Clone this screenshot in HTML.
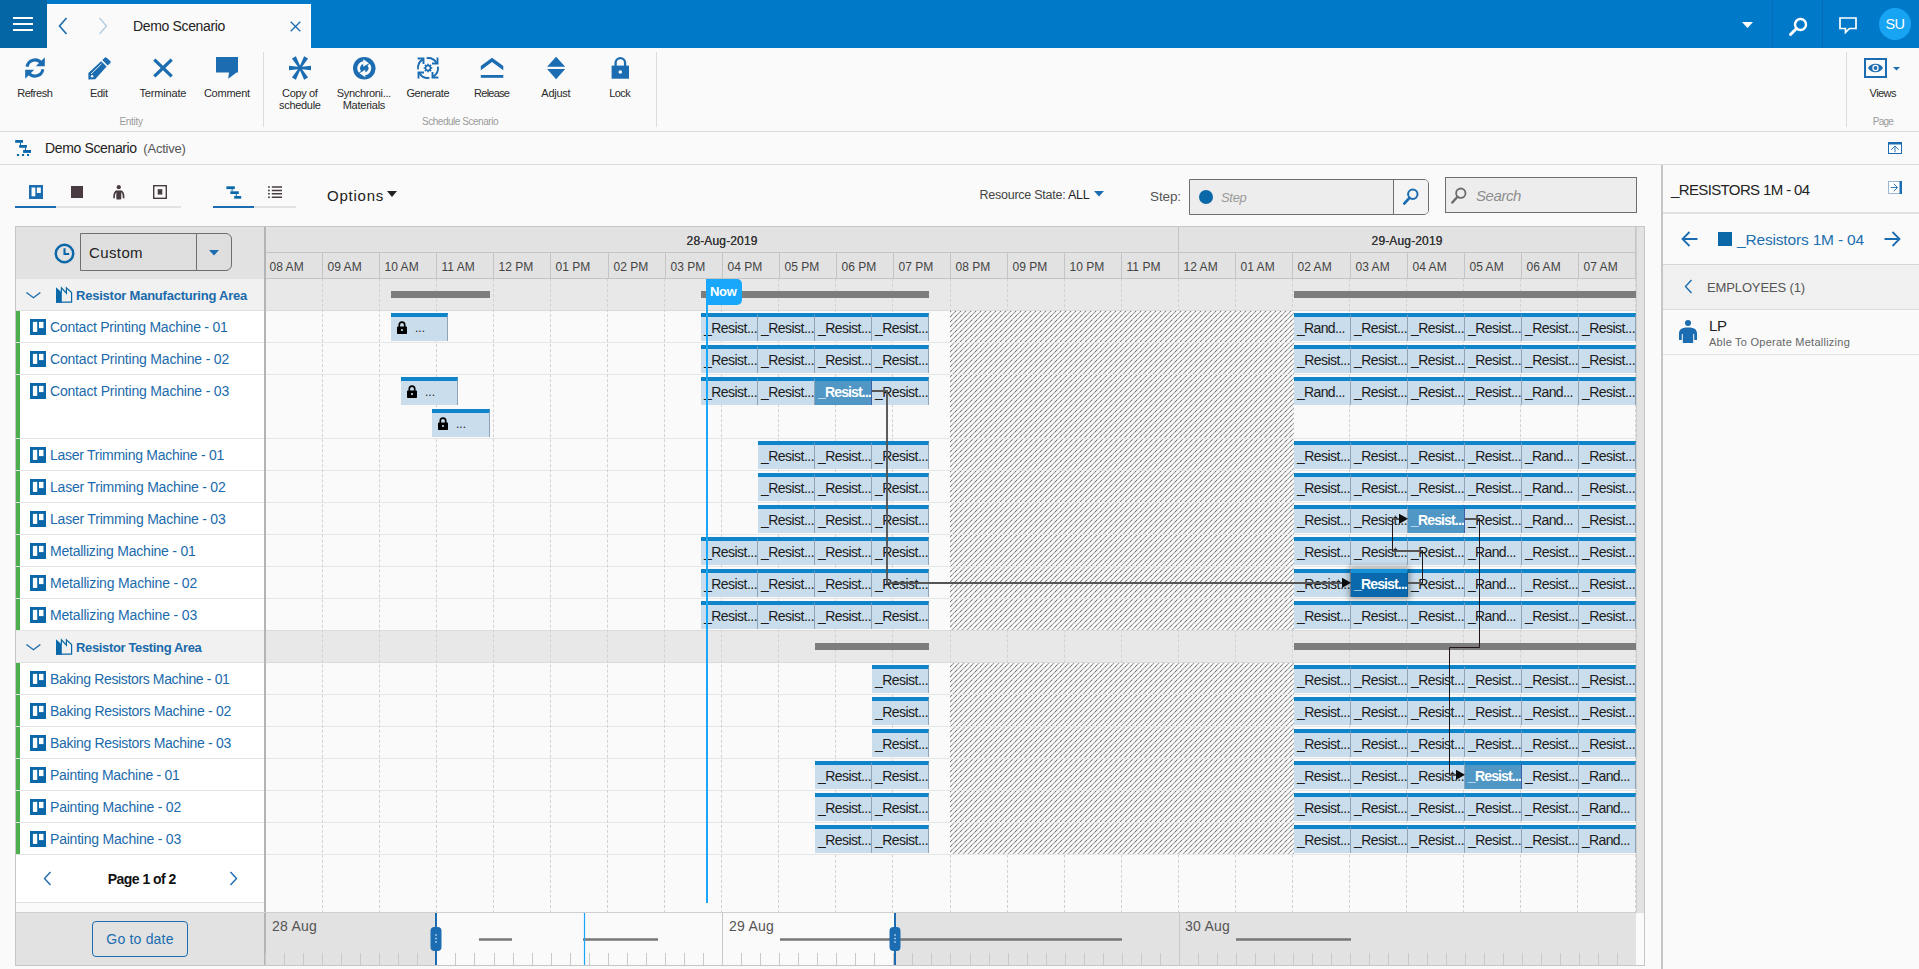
<!DOCTYPE html>
<html lang="en"><head><meta charset="utf-8"><title>Demo Scenario</title>
<style>
*{box-sizing:border-box;margin:0;padding:0}
html,body{width:1919px;height:969px;overflow:hidden;background:#fafafa;font-family:"Liberation Sans",sans-serif;color:#222;font-size:14px}
#root{position:absolute;left:0;top:0;width:1919px;height:969px;overflow:hidden;background:#fafafa}
.a{position:absolute}
svg{position:absolute;overflow:visible}
.t{position:absolute;white-space:nowrap;line-height:1}
.rb{position:absolute;top:48px;width:64px;height:83px;text-align:center}
.rb .l{position:absolute;left:-10px;right:-10px;font-size:11px;line-height:12px;color:#2a2a2a;text-align:center;white-space:nowrap}
.grp{position:absolute;top:117px;font-size:10px;color:#9a9a9a;line-height:10px;white-space:nowrap;transform:translateX(-50%)}
.row{position:absolute;left:16px;width:248px;height:32px;background:#fff;border-bottom:1px solid #e4e4e4}
.row .g{position:absolute;left:0;top:0;width:4px;height:100%;background:#4cae4c}
.row .n{position:absolute;left:34px;top:9px;line-height:14px;font-size:14px;color:#1b6aab;white-space:nowrap}
.gr{position:absolute;left:16px;width:248px;height:32px;background:#f1f1f1;border-bottom:1px solid #e0e0e0}
.gr .n{position:absolute;left:60px;top:10px;line-height:13px;font-size:13px;font-weight:bold;color:#1b6aab;white-space:nowrap}
.tk{position:absolute;height:28px;background:#c9ddec;border-top:4px solid #0f84c8;border-right:1px solid #8fa3b5;font-size:14px;line-height:23px;color:#1c1c1c;white-space:nowrap;overflow:hidden;padding-left:3px}
.tk.h{background:#5097c5;color:#fff;border-right-color:#3d5ea6;font-weight:bold}
.tk.s{background:#0a69ad;color:#fff;border-top-color:#1390d8;border-right-color:#0a5a98;box-shadow:0 0 6px 2px rgba(0,0,0,.35);font-weight:bold}
.hl{position:absolute;top:253px;height:25px;border-left:1px solid #c4c4c4;font-size:12px;line-height:28px;color:#444;padding-left:4.500px;white-space:nowrap;letter-spacing:.03px}
.bar{position:absolute;height:7px;background:#7d7d7d}
</style></head>
<body><div id="root">

<div class="a" style="left:0;top:0;width:1919px;height:48px;background:#0079c9"></div>
<div class="a" style="left:0;top:0;width:47px;height:48px;background:#0466a5"></div>
<svg style="left:13px;top:16px" width="21" height="16" viewBox="0 0 21 16"><path d="M0 2h20M0 8h20M0 14h20" stroke="#fff" stroke-width="2" fill="none"/></svg>
<div class="a" style="left:47px;top:4px;width:264px;height:44px;background:#fafafa;border-top:1px solid #fff;border-right:1px solid #fff"></div>
<svg style="left:58px;top:17px" width="10" height="18" viewBox="0 0 10 18"><path d="M8.5 1L1.5 9l7 8" stroke="#1b6cb0" stroke-width="1.6" fill="none"/></svg>
<svg style="left:98px;top:17px" width="10" height="18" viewBox="0 0 10 18"><path d="M1.5 1l7 8-7 8" stroke="#b4d0e6" stroke-width="1.5" fill="none"/></svg>
<div class="t" style="top:19.15px;font-size:14px;color:#222;left:133px;letter-spacing:-0.345px;">Demo Scenario</div>
<svg style="left:290px;top:21px" width="11" height="11" viewBox="0 0 11 11"><path d="M.7.7l9.6 9.6M10.3.7L.7 10.3" stroke="#1b6cb0" stroke-width="1.3" fill="none"/></svg>
<svg style="left:1742px;top:21.500px" width="12" height="7" viewBox="0 0 12 7"><path d="M0 0h11L5.5 6z" fill="#fff"/></svg>
<div class="a" style="left:1772px;top:0;width:1px;height:48px;background:#0a6bb5"></div>
<div class="a" style="left:1822px;top:0;width:1px;height:48px;background:#0a6bb5"></div>
<svg style="left:1789px;top:16.500px" width="19" height="19" viewBox="0 0 19 19"><circle cx="11.5" cy="7.5" r="5.5" stroke="#fff" stroke-width="2.4" fill="none"/><path d="M7.5 11.5L1.5 17.5" stroke="#fff" stroke-width="3" stroke-linecap="round"/></svg>
<svg style="left:1838.500px;top:16.500px" width="18" height="17" viewBox="0 0 18 17"><path d="M1 1h16v10.5h-6.5L6.5 15.5v-4H1z" stroke="#fff" stroke-width="1.7" fill="none" stroke-linejoin="miter"/></svg>
<div class="a" style="left:1879px;top:8px;width:32px;height:32px;border-radius:16px;background:#17a4f3"></div>
<div class="t" style="top:16.73px;font-size:14.5px;color:#fff;left:1745.3px;width:300px;text-align:center;letter-spacing:-0.571px;text-indent:-0.571px;">SU</div>
<div class="a" style="left:0;top:131px;width:1919px;height:1px;background:#d9d9d9"></div>
<div class="a" style="left:0;top:164px;width:1919px;height:1px;background:#dedede"></div>
<div class="a" style="left:263px;top:52px;width:1px;height:75px;background:#dcdcdc"></div>
<div class="a" style="left:656px;top:52px;width:1px;height:75px;background:#dcdcdc"></div>
<div class="a" style="left:1846px;top:52px;width:1px;height:75px;background:#dcdcdc"></div>
<div class="rb" style="left:3px"><svg style="left:22px;top:9px" width="20" height="22" viewBox="0 0 20 22"><path d="M2.100 9.700A8 8 0 0 1 16.300 6" stroke="#1b6cb0" stroke-width="3" fill="none"/><path d="M19.800.3V9.200H10.800z" fill="#1b6cb0"/><path d="M17.900 12.300A8 8 0 0 1 3.700 16" stroke="#1b6cb0" stroke-width="3" fill="none"/><path d="M.2 21.700V12.800H9.200z" fill="#1b6cb0"/></svg><div class="l" style="top:39px;letter-spacing:-0.474px;text-indent:-0.474px">Refresh</div></div>
<div class="rb" style="left:67px"><svg style="left:20.500px;top:8.700px" width="23" height="23" viewBox="0 0 23 23"><path d="M14.300 3L16.700.7a1.300 1.300 0 0 1 1.900 0L22.300 4.100a1.300 1.300 0 0 1 0 1.900L19.700 8.400z" fill="#1b6cb0"/><path d="M.4 15.900L13.100 4.200l5.500 5.300L7.200 22.200.4 22.400z" fill="#1b6cb0"/><path d="M3 17L13.500 6.800" stroke="#fafafa" stroke-width=".9"/><circle cx="4.100" cy="19.300" r="1.200" fill="#fafafa"/></svg><div class="l" style="top:39px;letter-spacing:-0.289px;text-indent:-0.289px">Edit</div></div>
<div class="rb" style="left:131px"><svg style="left:22px;top:10px" width="20" height="20" viewBox="0 0 20 20"><path d="M1.300 1.600l17.400 16.800M18.700 1.600L1.300 18.400" stroke="#1b6cb0" stroke-width="3.300" fill="none"/></svg><div class="l" style="top:39px;letter-spacing:-0.166px;text-indent:-0.166px">Terminate</div></div>
<div class="rb" style="left:195px"><svg style="left:21px;top:9px" width="22" height="22" viewBox="0 0 22 22"><path d="M0 0h22v15.400h-1.400L12.200 21.800 13 15.400H0z" fill="#1b6cb0"/></svg><div class="l" style="top:39px;letter-spacing:-0.24px;text-indent:-0.24px">Comment</div></div>
<div class="rb" style="left:268px"><svg style="left:21.200px;top:9px" width="22" height="22" viewBox="0 0 22 22"><path d="M11.00 10.10L22.00 8.70L22.00 13.30L11.00 11.90zM11.78 10.55L19.09 20.42L15.11 22.72L10.22 11.45zM11.78 11.45L6.89 22.72L2.91 20.42L10.22 10.55zM11.00 11.90L0.00 13.30L-0.00 8.70L11.00 10.10zM10.22 11.45L2.91 1.58L6.89 -0.72L11.78 10.55zM10.22 10.55L15.11 -0.72L19.09 1.58L11.78 11.45z" fill="#1b6cb0"/><circle cx="11" cy="11" r="1.600" fill="#1b6cb0"/></svg><div class="l" style="top:39px;letter-spacing:-0.344px;text-indent:-0.344px">Copy of</div><div class="l" style="top:51px;letter-spacing:-0.317px;text-indent:-0.317px">schedule</div></div>
<div class="rb" style="left:332px"><svg style="left:20.750px;top:8.750px" width="22.500" height="22.500" viewBox="0 0 22.500 22.500"><circle cx="11.25" cy="11.25" r="11.250" fill="#1b6cb0"/><path d="M6.96 14.85A5.600 5.600 0 0 1 10.47 5.70" stroke="#fafafa" stroke-width="2.700" fill="none"/><path d="M10.200 2.200L16 6.200 10.200 9.800z" fill="#fafafa"/><path d="M15.54 7.65A5.600 5.600 0 0 1 12.03 16.80" stroke="#fafafa" stroke-width="2.700" fill="none"/><path d="M12.300 20.300L6.500 16.300 12.300 12.700z" fill="#fafafa"/></svg><div class="l" style="top:39px;letter-spacing:-0.34px;text-indent:-0.34px">Synchroni...</div><div class="l" style="top:51px;letter-spacing:-0.236px;text-indent:-0.236px">Materials</div></div>
<div class="rb" style="left:396px"><svg style="left:21px;top:9px" width="22" height="22" viewBox="0 0 22 22"><g stroke="#1b6cb0" stroke-width="1.900" fill="none"><g transform="rotate(0 11 11)"><path d="M1.10 12.39A10 10 0 0 1 6.00 2.34" /><path d="M.6 1.500H6.500V7"/></g><g transform="rotate(90 11 11)"><path d="M1.10 12.39A10 10 0 0 1 6.00 2.34" /><path d="M.6 1.500H6.500V7"/></g><g transform="rotate(180 11 11)"><path d="M1.10 12.39A10 10 0 0 1 6.00 2.34" /><path d="M.6 1.500H6.500V7"/></g><g transform="rotate(270 11 11)"><path d="M1.10 12.39A10 10 0 0 1 6.00 2.34" /><path d="M.6 1.500H6.500V7"/></g><circle cx="11" cy="11" r="2.500" stroke-width="1.700"/><path d="M13.60 11.00L15.30 11.00M12.84 12.84L14.04 14.04M11.00 13.60L11.00 15.30M9.16 12.84L7.96 14.04M8.40 11.00L6.70 11.00M9.16 9.16L7.96 7.96M11.00 8.40L11.00 6.70M12.84 9.16L14.04 7.96" stroke-width="1.700"/></g></svg><div class="l" style="top:39px;letter-spacing:-0.395px;text-indent:-0.395px">Generate</div></div>
<div class="rb" style="left:460px"><svg style="left:20px;top:9px" width="24" height="22" viewBox="0 0 24 22"><path d="M.8 9L12 .8 23.300 9v4.300L12 4.900.8 13.300z" fill="#1b6cb0"/><rect x=".8" y="18" width="22.500" height="2.800" fill="#1b6cb0"/></svg><div class="l" style="top:39px;letter-spacing:-0.766px;text-indent:-0.766px">Release</div></div>
<div class="rb" style="left:524px"><svg style="left:23px;top:8px" width="19" height="24" viewBox="0 0 19 24"><path d="M9.100.7L18.200 10.800H.1zM.1 13.100H18.200L9.100 23.200z" fill="#1b6cb0"/></svg><div class="l" style="top:39px;letter-spacing:-0.262px;text-indent:-0.262px">Adjust</div></div>
<div class="rb" style="left:588px"><svg style="left:23px;top:8px" width="19" height="23" viewBox="0 0 19 23"><path d="M4.600 10.500V6.800a4.750 4.750 0 0 1 9.500 0V10.500" stroke="#1b6cb0" stroke-width="2.300" fill="none"/><rect x=".6" y="9.600" width="17.400" height="13.100" fill="#1b6cb0"/><circle cx="9.300" cy="16" r="1.800" fill="#fafafa"/></svg><div class="l" style="top:39px;letter-spacing:-0.609px;text-indent:-0.609px">Lock</div></div>
<div class="rb" style="left:1851px"><svg style="left:13.200px;top:10px" width="36" height="20" viewBox="0 0 36 20"><rect x="1" y="1" width="21" height="18" stroke="#1b6cb0" stroke-width="2" fill="none"/><path d="M4 10c3.200-5.600 11.800-5.600 15 0-3.200 5.600-11.800 5.600-15 0z" fill="#1b6cb0"/><circle cx="11.500" cy="10" r="3.200" fill="#fafafa"/><circle cx="11.500" cy="10" r="1.900" fill="#1b6cb0"/><path d="M29 9h7l-3.500 3.500z" fill="#1b6cb0"/></svg><div class="l" style="top:39px;letter-spacing:-0.569px;text-indent:-0.569px">Views</div></div>
<div class="grp" style="left:131px;letter-spacing:-0.302px">Entity</div>
<div class="grp" style="left:460px;letter-spacing:-0.467px">Schedule Scenario</div>
<div class="grp" style="left:1883px;letter-spacing:-0.764px">Page</div>
<svg style="left:15px;top:140px" width="17" height="17" viewBox="0 0 17 17"><g fill="#0a68a9"><rect x=".2" y="0" width="7.800" height="2.800"/><rect x="4.200" y="5" width="7.700" height="2.800"/><rect x="8.100" y="10" width="7.900" height="2.900"/><rect x="5" y="2.800" width="1" height="2.200"/><rect x="10" y="7.800" width="1" height="2.200"/><rect x="1.900" y="14" width="2.200" height="2"/><rect x="7" y="14" width="2.100" height="2"/><rect x="12" y="14" width="2.100" height="2"/></g></svg>
<div class="t" style="top:141.15px;font-size:14px;color:#222;left:45px;letter-spacing:-0.361px;">Demo Scenario</div>
<div class="t" style="top:142.00px;font-size:13px;color:#555;left:143.3px;letter-spacing:-0.207px;">(Active)</div>
<svg style="left:1888px;top:142px" width="14" height="12" viewBox="0 0 14 12"><rect x=".5" y=".5" width="13" height="11" stroke="#1b6cb0" fill="#fff"/><rect x="0" y="0" width="14" height="2.500" fill="#1b6cb0"/><path d="M7 10.300V4.200M3.200 7.800L7 4l3.800 3.800" stroke="#1b6cb0" stroke-width=".9" fill="none"/></svg>
<div class="a" style="left:15px;top:206px;width:166px;height:2px;background:#e2e2e2"></div>
<div class="a" style="left:15px;top:206px;width:41px;height:2px;background:#1b6cb0"></div>
<div class="a" style="left:213px;top:206px;width:83px;height:2px;background:#e2e2e2"></div>
<div class="a" style="left:213px;top:206px;width:41px;height:2px;background:#1b6cb0"></div>
<svg style="left:29px;top:185px" width="14" height="14" viewBox="0 0 16 16"><rect width="16" height="16" fill="#1b6cb0"/><rect x="2.900" y="2.900" width="4.300" height="10" fill="#fff"/><rect x="9" y="2.900" width="4.500" height="6.200" fill="#fff"/></svg>
<div class="a" style="left:71px;top:186px;width:12px;height:12px;background:#483c42"></div>
<svg style="left:112.500px;top:184.500px" width="12" height="15" viewBox="0 0 12 15"><circle cx="5.800" cy="2.200" r="2.100" fill="#483c42"/><path d="M3.300 5.500H8.300V13.600a1 1 0 0 1-1 1H4.300a1 1 0 0 1-1-1z" fill="#483c42"/><path d="M4 6.100C1.800 6.500 1 9 1 13.200M7.600 6.100C9.800 6.500 10.700 9 10.700 13.200" stroke="#483c42" stroke-width="1.700" fill="none"/></svg>
<svg style="left:153px;top:185px" width="14" height="14" viewBox="0 0 14 14"><rect x=".7" y=".7" width="12.600" height="12.600" stroke="#483c42" stroke-width="1.400" fill="none"/><rect x="4.700" y="4.200" width="4.600" height="5.400" fill="#483c42"/></svg>
<svg style="left:226px;top:185.500px" width="16" height="13" viewBox="0 0 16 13"><g fill="#0a68a9"><rect x=".4" y=".3" width="8.400" height="2.800"/><rect x="4.300" y="5.300" width="8.500" height="2.700"/><rect x="8.200" y="10" width="7" height="2.700"/><rect x="5.600" y="3.100" width="1" height="2.200"/><rect x="9.800" y="8" width="1" height="2"/></g></svg>
<svg style="left:268px;top:186px" width="14" height="12" viewBox="0 0 14 12"><path d="M3.800 1h10.200M3.800 4.400h10.200M3.800 7.800h10.200M3.800 11.200h10.200" stroke="#483c42" stroke-width="1.500"/><path d="M0 1h1.800M0 4.400h1.800M0 7.800h1.800M0 11.200h1.800" stroke="#483c42" stroke-width="1.500"/></svg>
<div class="t" style="top:187.80px;font-size:15px;color:#222;left:327px;letter-spacing:0.758px;">Options</div>
<svg style="left:387px;top:191px" width="10" height="6" viewBox="0 0 10 6"><path d="M0 0h10L5 6z" fill="#222"/></svg>
<div class="t" style="top:189.42px;font-size:12.5px;color:#444;left:979.5px;letter-spacing:-0.245px;">Resource State: <span style="color:#222">ALL</span></div>
<svg style="left:1094px;top:191px" width="10" height="6" viewBox="0 0 10 6"><path d="M0 0h10L5 5.500z" fill="#1b6cb0"/></svg>
<div class="t" style="top:190.07px;font-size:13.5px;color:#555;left:1150px;letter-spacing:-0.104px;">Step:</div>
<div class="a" style="left:1189px;top:179px;width:240px;height:36px;border:1px solid #6f6f6f;border-radius:0 5px 5px 0;background:#ededed"></div>
<div class="a" style="left:1393px;top:180px;width:1px;height:34px;background:#6f6f6f"></div>
<div class="a" style="left:1394px;top:180px;width:34px;height:34px;border-radius:0 4px 4px 0;background:#f4f4f4"></div>
<div class="a" style="left:1199px;top:190px;width:14px;height:14px;border-radius:7px;background:#0a68a9"></div>
<div class="t" style="top:190.50px;font-size:13px;color:#999;left:1221px;letter-spacing:-0.311px;font-style:italic;">Step</div>
<svg style="left:1403px;top:188px" width="16" height="17" viewBox="0 0 16 17"><circle cx="9.800" cy="6.200" r="4.700" stroke="#1b6cb0" stroke-width="2" fill="none"/><path d="M6.500 9.800L1.300 15.500" stroke="#1b6cb0" stroke-width="2.600" stroke-linecap="round"/></svg>
<div class="a" style="left:1445px;top:177px;width:192px;height:36px;border:1px solid #6f6f6f;background:#ededed"></div>
<svg style="left:1451px;top:187px" width="16" height="17" viewBox="0 0 16 17"><circle cx="9.800" cy="6.200" r="4.700" stroke="#6a6a6a" stroke-width="1.800" fill="none"/><path d="M6.500 9.800L1.300 15.500" stroke="#6a6a6a" stroke-width="2.400" stroke-linecap="round"/></svg>
<div class="t" style="top:187.80px;font-size:15px;color:#8e8e8e;left:1476px;letter-spacing:-0.421px;font-style:italic;">Search</div>
<div class="a" style="left:15px;top:226px;width:1630px;height:740px;border:1px solid #c6c6c6;background:#fafafa"></div>
<div class="a" style="left:16px;top:227px;width:1628px;height:52px;background:#e2e2e2"></div>
<div class="a" style="left:16px;top:279px;width:248px;height:623px;background:#fff"></div>
<div class="a" style="left:1636px;top:227px;width:8px;height:686px;background:#e2e2e2;border-left:1px solid #cfcfcf"></div>
<div class="a" style="left:16px;top:913px;width:1620px;height:52px;background:#e2e2e2"></div>
<div class="a" style="left:266px;top:279px;width:1370px;height:31px;background:#e8e8e8"></div>
<div class="a" style="left:266px;top:631px;width:1370px;height:31px;background:#e8e8e8"></div>
<div class="a" style="left:266px;top:278px;width:1370px;height:1px;background:#c4c4c4"></div>
<div class="a" style="left:266px;top:310px;width:1370px;height:1px;background:#dadada"></div>
<div class="a" style="left:266px;top:342px;width:1370px;height:1px;background:#e6e6e6"></div>
<div class="a" style="left:266px;top:374px;width:1370px;height:1px;background:#e6e6e6"></div>
<div class="a" style="left:266px;top:438px;width:1370px;height:1px;background:#e6e6e6"></div>
<div class="a" style="left:266px;top:470px;width:1370px;height:1px;background:#e6e6e6"></div>
<div class="a" style="left:266px;top:502px;width:1370px;height:1px;background:#e6e6e6"></div>
<div class="a" style="left:266px;top:534px;width:1370px;height:1px;background:#e6e6e6"></div>
<div class="a" style="left:266px;top:566px;width:1370px;height:1px;background:#e6e6e6"></div>
<div class="a" style="left:266px;top:598px;width:1370px;height:1px;background:#e6e6e6"></div>
<div class="a" style="left:266px;top:630px;width:1370px;height:1px;background:#dadada"></div>
<div class="a" style="left:266px;top:662px;width:1370px;height:1px;background:#dadada"></div>
<div class="a" style="left:266px;top:694px;width:1370px;height:1px;background:#e6e6e6"></div>
<div class="a" style="left:266px;top:726px;width:1370px;height:1px;background:#e6e6e6"></div>
<div class="a" style="left:266px;top:758px;width:1370px;height:1px;background:#e6e6e6"></div>
<div class="a" style="left:266px;top:790px;width:1370px;height:1px;background:#e6e6e6"></div>
<div class="a" style="left:266px;top:822px;width:1370px;height:1px;background:#e6e6e6"></div>
<div class="a" style="left:266px;top:854px;width:1370px;height:1px;background:#e6e6e6"></div>
<div class="a" style="left:266px;top:252px;width:1370px;height:1px;background:#c4c4c4"></div>
<div class="hl" style="left:265px;width:57px;border-left:none">08 AM</div>
<div class="a" style="left:322px;top:279px;width:0;height:634px;border-left:1px dashed #d2d2d2"></div>
<div class="hl" style="left:322px;width:57px">09 AM</div>
<div class="a" style="left:379px;top:279px;width:0;height:634px;border-left:1px dashed #d2d2d2"></div>
<div class="hl" style="left:379px;width:57px">10 AM</div>
<div class="a" style="left:436px;top:279px;width:0;height:634px;border-left:1px dashed #d2d2d2"></div>
<div class="hl" style="left:436px;width:57px">11 AM</div>
<div class="a" style="left:493px;top:279px;width:0;height:634px;border-left:1px dashed #d2d2d2"></div>
<div class="hl" style="left:493px;width:57px">12 PM</div>
<div class="a" style="left:550px;top:279px;width:0;height:634px;border-left:1px dashed #d2d2d2"></div>
<div class="hl" style="left:550px;width:57px">01 PM</div>
<div class="a" style="left:607px;top:279px;width:0;height:634px;border-left:1px dashed #d2d2d2"></div>
<div class="hl" style="left:608px;width:57px">02 PM</div>
<div class="a" style="left:664px;top:279px;width:0;height:634px;border-left:1px dashed #d2d2d2"></div>
<div class="hl" style="left:665px;width:57px">03 PM</div>
<div class="a" style="left:721px;top:279px;width:0;height:634px;border-left:1px dashed #d2d2d2"></div>
<div class="hl" style="left:722px;width:57px">04 PM</div>
<div class="a" style="left:778px;top:279px;width:0;height:634px;border-left:1px dashed #d2d2d2"></div>
<div class="hl" style="left:779px;width:57px">05 PM</div>
<div class="a" style="left:835px;top:279px;width:0;height:634px;border-left:1px dashed #d2d2d2"></div>
<div class="hl" style="left:836px;width:57px">06 PM</div>
<div class="a" style="left:892px;top:279px;width:0;height:634px;border-left:1px dashed #d2d2d2"></div>
<div class="hl" style="left:893px;width:57px">07 PM</div>
<div class="a" style="left:950px;top:279px;width:0;height:634px;border-left:1px dashed #d2d2d2"></div>
<div class="hl" style="left:950px;width:57px">08 PM</div>
<div class="a" style="left:1007px;top:279px;width:0;height:634px;border-left:1px dashed #d2d2d2"></div>
<div class="hl" style="left:1007px;width:57px">09 PM</div>
<div class="a" style="left:1064px;top:279px;width:0;height:634px;border-left:1px dashed #d2d2d2"></div>
<div class="hl" style="left:1064px;width:57px">10 PM</div>
<div class="a" style="left:1121px;top:279px;width:0;height:634px;border-left:1px dashed #d2d2d2"></div>
<div class="hl" style="left:1121px;width:57px">11 PM</div>
<div class="a" style="left:1178px;top:279px;width:0;height:634px;border-left:1px dashed #d2d2d2"></div>
<div class="hl" style="left:1178px;width:57px">12 AM</div>
<div class="a" style="left:1235px;top:279px;width:0;height:634px;border-left:1px dashed #d2d2d2"></div>
<div class="hl" style="left:1235px;width:57px">01 AM</div>
<div class="a" style="left:1292px;top:279px;width:0;height:634px;border-left:1px dashed #d2d2d2"></div>
<div class="hl" style="left:1292px;width:57px">02 AM</div>
<div class="a" style="left:1349px;top:279px;width:0;height:634px;border-left:1px dashed #d2d2d2"></div>
<div class="hl" style="left:1350px;width:57px">03 AM</div>
<div class="a" style="left:1406px;top:279px;width:0;height:634px;border-left:1px dashed #d2d2d2"></div>
<div class="hl" style="left:1407px;width:57px">04 AM</div>
<div class="a" style="left:1463px;top:279px;width:0;height:634px;border-left:1px dashed #d2d2d2"></div>
<div class="hl" style="left:1464px;width:57px">05 AM</div>
<div class="a" style="left:1520px;top:279px;width:0;height:634px;border-left:1px dashed #d2d2d2"></div>
<div class="hl" style="left:1521px;width:57px">06 AM</div>
<div class="a" style="left:1577px;top:279px;width:0;height:634px;border-left:1px dashed #d2d2d2"></div>
<div class="hl" style="left:1578px;width:57px">07 AM</div>
<div class="a" style="left:1635px;top:227px;width:1px;height:52px;background:#c4c4c4"></div>
<div class="a" style="left:1635px;top:279px;width:0;height:634px;border-left:1px dashed #d2d2d2"></div>
<div class="a" style="left:1178px;top:227px;width:1px;height:26px;background:#c4c4c4"></div>
<div class="t" style="top:234.84px;font-size:12px;color:#333;left:572px;width:300px;text-align:center;letter-spacing:0.147px;text-indent:0.147px;text-shadow:0 0 .4px #333;">28-Aug-2019</div>
<div class="t" style="top:234.84px;font-size:12px;color:#333;left:1257px;width:300px;text-align:center;letter-spacing:0.147px;text-indent:0.147px;text-shadow:0 0 .4px #333;">29-Aug-2019</div>
<svg style="left:950px;top:311px" width="344" height="543" viewBox="0 0 344 543"><defs><pattern id="hz" width="5" height="5" patternUnits="userSpaceOnUse" patternTransform="translate(1 0)"><rect width="5" height="5" fill="#fdfdfd"/><path d="M-1 6L6 -1M-1 1L1 -1M4 6L6 4" stroke="#a6a6a6" stroke-width="1.100"/><rect x="0" y="4" width="1" height="1" fill="#7e7e7e"/><rect x="4" y="0" width="1" height="1" fill="#7e7e7e"/></pattern></defs><rect x="0" y="0" width="344" height="319" fill="url(#hz)"/><rect x="0" y="352" width="344" height="191" fill="url(#hz)"/></svg>
<div class="a" style="left:950px;top:342px;width:344px;height:1px;background:rgba(235,235,235,.75)"></div>
<div class="a" style="left:950px;top:374px;width:344px;height:1px;background:rgba(235,235,235,.75)"></div>
<div class="a" style="left:950px;top:438px;width:344px;height:1px;background:rgba(235,235,235,.75)"></div>
<div class="a" style="left:950px;top:470px;width:344px;height:1px;background:rgba(235,235,235,.75)"></div>
<div class="a" style="left:950px;top:502px;width:344px;height:1px;background:rgba(235,235,235,.75)"></div>
<div class="a" style="left:950px;top:534px;width:344px;height:1px;background:rgba(235,235,235,.75)"></div>
<div class="a" style="left:950px;top:566px;width:344px;height:1px;background:rgba(235,235,235,.75)"></div>
<div class="a" style="left:950px;top:598px;width:344px;height:1px;background:rgba(235,235,235,.75)"></div>
<div class="a" style="left:950px;top:694px;width:344px;height:1px;background:rgba(235,235,235,.75)"></div>
<div class="a" style="left:950px;top:726px;width:344px;height:1px;background:rgba(235,235,235,.75)"></div>
<div class="a" style="left:950px;top:758px;width:344px;height:1px;background:rgba(235,235,235,.75)"></div>
<div class="a" style="left:950px;top:790px;width:344px;height:1px;background:rgba(235,235,235,.75)"></div>
<div class="a" style="left:950px;top:822px;width:344px;height:1px;background:rgba(235,235,235,.75)"></div>
<div class="a" style="left:264px;top:227px;width:2px;height:738px;background:#b4b4b4"></div>
<svg style="left:53.600px;top:242.600px" width="21" height="21" viewBox="0 0 21 21"><circle cx="10.500" cy="10.500" r="8.700" stroke="#0a68a9" stroke-width="2.500" fill="none"/><path d="M10.500 5.300v5.700h4.700" stroke="#0a68a9" stroke-width="2.100" fill="none"/></svg>
<div class="a" style="left:80px;top:233px;width:152px;height:38px;border:1px solid #6f6f6f;border-radius:0 6px 6px 0;background:#dedede"></div>
<div class="a" style="left:196px;top:234px;width:1px;height:36px;background:#6f6f6f"></div>
<div class="t" style="top:245.30px;font-size:15px;color:#222;left:89px;letter-spacing:0.387px;">Custom</div>
<svg style="left:209.300px;top:250.400px" width="10" height="6" viewBox="0 0 10 6"><path d="M0 0h10L5 5.500z" fill="#1b6cb0"/></svg>
<div class="gr" style="top:279px"><svg style="left:9.600px;top:12.500px" width="15" height="7" viewBox="0 0 15 7"><path d="M.4 .5L7.400 5.700 14.400 .5" stroke="#1b6cb0" stroke-width="1.400" fill="none"/></svg><svg style="left:40px;top:8px" width="17" height="16" viewBox="0 0 17 16"><path d="M0 .2L5.800 5.500V15.800H0z" fill="#0a68a9"/><path d="M5.400 5.300V.8L10.400 6.200V.8L15.600 5.600V15.200H0" stroke="#0a68a9" stroke-width="1.200" fill="none"/></svg><div class="n" style="letter-spacing:-0.23px">Resistor Manufacturing Area</div></div>
<div class="row" style="top:311px;height:32px"><div class="g"></div><svg style="left:14px;top:8px" width="16" height="16" viewBox="0 0 16 16"><rect width="16" height="16" fill="#0a68a9"/><rect x="2.900" y="2.900" width="4.300" height="10" fill="#fff"/><rect x="9" y="2.900" width="4.500" height="6.200" fill="#fff"/></svg><div class="n" style="letter-spacing:-0.239px">Contact Printing Machine - 01</div></div>
<div class="row" style="top:343px;height:32px"><div class="g"></div><svg style="left:14px;top:8px" width="16" height="16" viewBox="0 0 16 16"><rect width="16" height="16" fill="#0a68a9"/><rect x="2.900" y="2.900" width="4.300" height="10" fill="#fff"/><rect x="9" y="2.900" width="4.500" height="6.200" fill="#fff"/></svg><div class="n" style="letter-spacing:-0.187px">Contact Printing Machine - 02</div></div>
<div class="row" style="top:375px;height:64px"><div class="g"></div><svg style="left:14px;top:8px" width="16" height="16" viewBox="0 0 16 16"><rect width="16" height="16" fill="#0a68a9"/><rect x="2.900" y="2.900" width="4.300" height="10" fill="#fff"/><rect x="9" y="2.900" width="4.500" height="6.200" fill="#fff"/></svg><div class="n" style="letter-spacing:-0.187px">Contact Printing Machine - 03</div></div>
<div class="row" style="top:439px;height:32px"><div class="g"></div><svg style="left:14px;top:8px" width="16" height="16" viewBox="0 0 16 16"><rect width="16" height="16" fill="#0a68a9"/><rect x="2.900" y="2.900" width="4.300" height="10" fill="#fff"/><rect x="9" y="2.900" width="4.500" height="6.200" fill="#fff"/></svg><div class="n" style="letter-spacing:-0.27px">Laser Trimming Machine - 01</div></div>
<div class="row" style="top:471px;height:32px"><div class="g"></div><svg style="left:14px;top:8px" width="16" height="16" viewBox="0 0 16 16"><rect width="16" height="16" fill="#0a68a9"/><rect x="2.900" y="2.900" width="4.300" height="10" fill="#fff"/><rect x="9" y="2.900" width="4.500" height="6.200" fill="#fff"/></svg><div class="n" style="letter-spacing:-0.214px">Laser Trimming Machine - 02</div></div>
<div class="row" style="top:503px;height:32px"><div class="g"></div><svg style="left:14px;top:8px" width="16" height="16" viewBox="0 0 16 16"><rect width="16" height="16" fill="#0a68a9"/><rect x="2.900" y="2.900" width="4.300" height="10" fill="#fff"/><rect x="9" y="2.900" width="4.500" height="6.200" fill="#fff"/></svg><div class="n" style="letter-spacing:-0.214px">Laser Trimming Machine - 03</div></div>
<div class="row" style="top:535px;height:32px"><div class="g"></div><svg style="left:14px;top:8px" width="16" height="16" viewBox="0 0 16 16"><rect width="16" height="16" fill="#0a68a9"/><rect x="2.900" y="2.900" width="4.300" height="10" fill="#fff"/><rect x="9" y="2.900" width="4.500" height="6.200" fill="#fff"/></svg><div class="n" style="letter-spacing:-0.227px">Metallizing Machine - 01</div></div>
<div class="row" style="top:567px;height:32px"><div class="g"></div><svg style="left:14px;top:8px" width="16" height="16" viewBox="0 0 16 16"><rect width="16" height="16" fill="#0a68a9"/><rect x="2.900" y="2.900" width="4.300" height="10" fill="#fff"/><rect x="9" y="2.900" width="4.500" height="6.200" fill="#fff"/></svg><div class="n" style="letter-spacing:-0.165px">Metallizing Machine - 02</div></div>
<div class="row" style="top:599px;height:32px"><div class="g"></div><svg style="left:14px;top:8px" width="16" height="16" viewBox="0 0 16 16"><rect width="16" height="16" fill="#0a68a9"/><rect x="2.900" y="2.900" width="4.300" height="10" fill="#fff"/><rect x="9" y="2.900" width="4.500" height="6.200" fill="#fff"/></svg><div class="n" style="letter-spacing:-0.165px">Metallizing Machine - 03</div></div>
<div class="gr" style="top:631px"><svg style="left:9.600px;top:12.500px" width="15" height="7" viewBox="0 0 15 7"><path d="M.4 .5L7.400 5.700 14.400 .5" stroke="#1b6cb0" stroke-width="1.400" fill="none"/></svg><svg style="left:40px;top:8px" width="17" height="16" viewBox="0 0 17 16"><path d="M0 .2L5.800 5.500V15.800H0z" fill="#0a68a9"/><path d="M5.400 5.300V.8L10.400 6.200V.8L15.600 5.600V15.200H0" stroke="#0a68a9" stroke-width="1.200" fill="none"/></svg><div class="n" style="letter-spacing:-0.354px">Resistor Testing Area</div></div>
<div class="row" style="top:663px;height:32px"><div class="g"></div><svg style="left:14px;top:8px" width="16" height="16" viewBox="0 0 16 16"><rect width="16" height="16" fill="#0a68a9"/><rect x="2.900" y="2.900" width="4.300" height="10" fill="#fff"/><rect x="9" y="2.900" width="4.500" height="6.200" fill="#fff"/></svg><div class="n" style="letter-spacing:-0.357px">Baking Resistors Machine - 01</div></div>
<div class="row" style="top:695px;height:32px"><div class="g"></div><svg style="left:14px;top:8px" width="16" height="16" viewBox="0 0 16 16"><rect width="16" height="16" fill="#0a68a9"/><rect x="2.900" y="2.900" width="4.300" height="10" fill="#fff"/><rect x="9" y="2.900" width="4.500" height="6.200" fill="#fff"/></svg><div class="n" style="letter-spacing:-0.306px">Baking Resistors Machine - 02</div></div>
<div class="row" style="top:727px;height:32px"><div class="g"></div><svg style="left:14px;top:8px" width="16" height="16" viewBox="0 0 16 16"><rect width="16" height="16" fill="#0a68a9"/><rect x="2.900" y="2.900" width="4.300" height="10" fill="#fff"/><rect x="9" y="2.900" width="4.500" height="6.200" fill="#fff"/></svg><div class="n" style="letter-spacing:-0.306px">Baking Resistors Machine - 03</div></div>
<div class="row" style="top:759px;height:32px"><div class="g"></div><svg style="left:14px;top:8px" width="16" height="16" viewBox="0 0 16 16"><rect width="16" height="16" fill="#0a68a9"/><rect x="2.900" y="2.900" width="4.300" height="10" fill="#fff"/><rect x="9" y="2.900" width="4.500" height="6.200" fill="#fff"/></svg><div class="n" style="letter-spacing:-0.282px">Painting Machine - 01</div></div>
<div class="row" style="top:791px;height:32px"><div class="g"></div><svg style="left:14px;top:8px" width="16" height="16" viewBox="0 0 16 16"><rect width="16" height="16" fill="#0a68a9"/><rect x="2.900" y="2.900" width="4.300" height="10" fill="#fff"/><rect x="9" y="2.900" width="4.500" height="6.200" fill="#fff"/></svg><div class="n" style="letter-spacing:-0.21px">Painting Machine - 02</div></div>
<div class="row" style="top:823px;height:32px"><div class="g"></div><svg style="left:14px;top:8px" width="16" height="16" viewBox="0 0 16 16"><rect width="16" height="16" fill="#0a68a9"/><rect x="2.900" y="2.900" width="4.300" height="10" fill="#fff"/><rect x="9" y="2.900" width="4.500" height="6.200" fill="#fff"/></svg><div class="n" style="letter-spacing:-0.21px">Painting Machine - 03</div></div>
<div class="a" style="left:16px;top:902px;width:248px;height:1px;background:#e0e0e0"></div>
<svg style="left:42.500px;top:871px" width="9" height="15" viewBox="0 0 9 15"><path d="M7.500 1L1.500 7.500l6 6.500" stroke="#1b6cb0" stroke-width="1.400" fill="none"/></svg>
<svg style="left:229px;top:871px" width="9" height="15" viewBox="0 0 9 15"><path d="M1.500 1l6 6.500-6 6.500" stroke="#1b6cb0" stroke-width="1.400" fill="none"/></svg>
<div class="t" style="top:872.15px;font-size:14px;color:#111;left:-8px;width:300px;text-align:center;letter-spacing:-0.538px;text-indent:-0.538px;font-weight:bold;">Page 1 of 2</div>
<div class="a" style="left:92px;top:921px;width:96px;height:36px;border:1px solid #1b6cb0;border-radius:4px;text-align:center;line-height:34px;font-size:14px;color:#1b6cb0;letter-spacing:.2px">Go to date</div>
<div class="bar" style="left:391px;top:291px;width:99px"></div>
<div class="bar" style="left:701px;top:291px;width:228px"></div>
<div class="bar" style="left:1294px;top:291px;width:342px"></div>
<div class="bar" style="left:815px;top:643px;width:114px"></div>
<div class="bar" style="left:1294px;top:643px;width:342px"></div>
<div class="tk" style="left:391px;top:313px;width:57px"><svg style="left:6px;top:4px" width="10" height="13" viewBox="0 0 10 13"><path d="M2.300 6V3.800a2.700 2.700 0 0 1 5.400 0V6" stroke="#000" stroke-width="1.700" fill="none"/><rect x="0" y="5.500" width="10" height="7.500" rx=".8" fill="#000"/><circle cx="5" cy="9" r="1.100" fill="#c9ddec"/></svg><span style="position:absolute;left:24px;top:0;font-size:12px;letter-spacing:0">...</span></div>
<div class="tk" style="left:401px;top:377px;width:57px"><svg style="left:6px;top:4px" width="10" height="13" viewBox="0 0 10 13"><path d="M2.300 6V3.800a2.700 2.700 0 0 1 5.400 0V6" stroke="#000" stroke-width="1.700" fill="none"/><rect x="0" y="5.500" width="10" height="7.500" rx=".8" fill="#000"/><circle cx="5" cy="9" r="1.100" fill="#c9ddec"/></svg><span style="position:absolute;left:24px;top:0;font-size:12px;letter-spacing:0">...</span></div>
<div class="tk" style="left:432px;top:409px;width:58px"><svg style="left:6px;top:4px" width="10" height="13" viewBox="0 0 10 13"><path d="M2.300 6V3.800a2.700 2.700 0 0 1 5.400 0V6" stroke="#000" stroke-width="1.700" fill="none"/><rect x="0" y="5.500" width="10" height="7.500" rx=".8" fill="#000"/><circle cx="5" cy="9" r="1.100" fill="#c9ddec"/></svg><span style="position:absolute;left:24px;top:0;font-size:12px;letter-spacing:0">...</span></div>
<div class="tk" style="left:701px;top:313px;width:57px;letter-spacing:-0.535px">_Resist...</div>
<div class="tk" style="left:758px;top:313px;width:57px;letter-spacing:-0.535px">_Resist...</div>
<div class="tk" style="left:815px;top:313px;width:57px;letter-spacing:-0.535px">_Resist...</div>
<div class="tk" style="left:872px;top:313px;width:57px;letter-spacing:-0.535px">_Resist...</div>
<div class="tk" style="left:701px;top:345px;width:57px;letter-spacing:-0.535px">_Resist...</div>
<div class="tk" style="left:758px;top:345px;width:57px;letter-spacing:-0.535px">_Resist...</div>
<div class="tk" style="left:815px;top:345px;width:57px;letter-spacing:-0.535px">_Resist...</div>
<div class="tk" style="left:872px;top:345px;width:57px;letter-spacing:-0.535px">_Resist...</div>
<div class="tk" style="left:701px;top:377px;width:57px;letter-spacing:-0.535px">_Resist...</div>
<div class="tk" style="left:758px;top:377px;width:57px;letter-spacing:-0.535px">_Resist...</div>
<div class="tk h" style="left:815px;top:377px;width:57px;letter-spacing:-0.848px">_Resist...</div>
<div class="tk" style="left:872px;top:377px;width:57px;letter-spacing:-0.535px">_Resist...</div>
<div class="tk" style="left:758px;top:441px;width:57px;letter-spacing:-0.535px">_Resist...</div>
<div class="tk" style="left:815px;top:441px;width:57px;letter-spacing:-0.535px">_Resist...</div>
<div class="tk" style="left:872px;top:441px;width:57px;letter-spacing:-0.535px">_Resist...</div>
<div class="tk" style="left:758px;top:473px;width:57px;letter-spacing:-0.535px">_Resist...</div>
<div class="tk" style="left:815px;top:473px;width:57px;letter-spacing:-0.535px">_Resist...</div>
<div class="tk" style="left:872px;top:473px;width:57px;letter-spacing:-0.535px">_Resist...</div>
<div class="tk" style="left:758px;top:505px;width:57px;letter-spacing:-0.535px">_Resist...</div>
<div class="tk" style="left:815px;top:505px;width:57px;letter-spacing:-0.535px">_Resist...</div>
<div class="tk" style="left:872px;top:505px;width:57px;letter-spacing:-0.535px">_Resist...</div>
<div class="tk" style="left:701px;top:537px;width:57px;letter-spacing:-0.535px">_Resist...</div>
<div class="tk" style="left:758px;top:537px;width:57px;letter-spacing:-0.535px">_Resist...</div>
<div class="tk" style="left:815px;top:537px;width:57px;letter-spacing:-0.535px">_Resist...</div>
<div class="tk" style="left:872px;top:537px;width:57px;letter-spacing:-0.535px">_Resist...</div>
<div class="tk" style="left:701px;top:569px;width:57px;letter-spacing:-0.535px">_Resist...</div>
<div class="tk" style="left:758px;top:569px;width:57px;letter-spacing:-0.535px">_Resist...</div>
<div class="tk" style="left:815px;top:569px;width:57px;letter-spacing:-0.535px">_Resist...</div>
<div class="tk" style="left:872px;top:569px;width:57px;letter-spacing:-0.535px">_Resist...</div>
<div class="tk" style="left:701px;top:601px;width:57px;letter-spacing:-0.535px">_Resist...</div>
<div class="tk" style="left:758px;top:601px;width:57px;letter-spacing:-0.535px">_Resist...</div>
<div class="tk" style="left:815px;top:601px;width:57px;letter-spacing:-0.535px">_Resist...</div>
<div class="tk" style="left:872px;top:601px;width:57px;letter-spacing:-0.535px">_Resist...</div>
<div class="tk" style="left:872px;top:665px;width:57px;letter-spacing:-0.535px">_Resist...</div>
<div class="tk" style="left:872px;top:697px;width:57px;letter-spacing:-0.535px">_Resist...</div>
<div class="tk" style="left:872px;top:729px;width:57px;letter-spacing:-0.535px">_Resist...</div>
<div class="tk" style="left:815px;top:761px;width:57px;letter-spacing:-0.535px">_Resist...</div>
<div class="tk" style="left:872px;top:761px;width:57px;letter-spacing:-0.535px">_Resist...</div>
<div class="tk" style="left:815px;top:793px;width:57px;letter-spacing:-0.535px">_Resist...</div>
<div class="tk" style="left:872px;top:793px;width:57px;letter-spacing:-0.535px">_Resist...</div>
<div class="tk" style="left:815px;top:825px;width:57px;letter-spacing:-0.535px">_Resist...</div>
<div class="tk" style="left:872px;top:825px;width:57px;letter-spacing:-0.535px">_Resist...</div>
<div class="tk" style="left:1294px;top:313px;width:57px;letter-spacing:-0.665px">_Rand...</div>
<div class="tk" style="left:1351px;top:313px;width:57px;letter-spacing:-0.535px">_Resist...</div>
<div class="tk" style="left:1408px;top:313px;width:57px;letter-spacing:-0.535px">_Resist...</div>
<div class="tk" style="left:1465px;top:313px;width:57px;letter-spacing:-0.535px">_Resist...</div>
<div class="tk" style="left:1522px;top:313px;width:57px;letter-spacing:-0.535px">_Resist...</div>
<div class="tk" style="left:1579px;top:313px;width:57px;letter-spacing:-0.535px">_Resist...</div>
<div class="tk" style="left:1294px;top:345px;width:57px;letter-spacing:-0.535px">_Resist...</div>
<div class="tk" style="left:1351px;top:345px;width:57px;letter-spacing:-0.535px">_Resist...</div>
<div class="tk" style="left:1408px;top:345px;width:57px;letter-spacing:-0.535px">_Resist...</div>
<div class="tk" style="left:1465px;top:345px;width:57px;letter-spacing:-0.535px">_Resist...</div>
<div class="tk" style="left:1522px;top:345px;width:57px;letter-spacing:-0.535px">_Resist...</div>
<div class="tk" style="left:1579px;top:345px;width:57px;letter-spacing:-0.535px">_Resist...</div>
<div class="tk" style="left:1294px;top:377px;width:57px;letter-spacing:-0.665px">_Rand...</div>
<div class="tk" style="left:1351px;top:377px;width:57px;letter-spacing:-0.535px">_Resist...</div>
<div class="tk" style="left:1408px;top:377px;width:57px;letter-spacing:-0.535px">_Resist...</div>
<div class="tk" style="left:1465px;top:377px;width:57px;letter-spacing:-0.535px">_Resist...</div>
<div class="tk" style="left:1522px;top:377px;width:57px;letter-spacing:-0.665px">_Rand...</div>
<div class="tk" style="left:1579px;top:377px;width:57px;letter-spacing:-0.535px">_Resist...</div>
<div class="tk" style="left:1294px;top:441px;width:57px;letter-spacing:-0.535px">_Resist...</div>
<div class="tk" style="left:1351px;top:441px;width:57px;letter-spacing:-0.535px">_Resist...</div>
<div class="tk" style="left:1408px;top:441px;width:57px;letter-spacing:-0.535px">_Resist...</div>
<div class="tk" style="left:1465px;top:441px;width:57px;letter-spacing:-0.535px">_Resist...</div>
<div class="tk" style="left:1522px;top:441px;width:57px;letter-spacing:-0.665px">_Rand...</div>
<div class="tk" style="left:1579px;top:441px;width:57px;letter-spacing:-0.535px">_Resist...</div>
<div class="tk" style="left:1294px;top:473px;width:57px;letter-spacing:-0.535px">_Resist...</div>
<div class="tk" style="left:1351px;top:473px;width:57px;letter-spacing:-0.535px">_Resist...</div>
<div class="tk" style="left:1408px;top:473px;width:57px;letter-spacing:-0.535px">_Resist...</div>
<div class="tk" style="left:1465px;top:473px;width:57px;letter-spacing:-0.535px">_Resist...</div>
<div class="tk" style="left:1522px;top:473px;width:57px;letter-spacing:-0.665px">_Rand...</div>
<div class="tk" style="left:1579px;top:473px;width:57px;letter-spacing:-0.535px">_Resist...</div>
<div class="tk" style="left:1294px;top:505px;width:57px;letter-spacing:-0.535px">_Resist...</div>
<div class="tk" style="left:1351px;top:505px;width:57px;letter-spacing:-0.535px">_Resist...</div>
<div class="tk h" style="left:1408px;top:505px;width:57px;letter-spacing:-0.848px">_Resist...</div>
<div class="tk" style="left:1465px;top:505px;width:57px;letter-spacing:-0.535px">_Resist...</div>
<div class="tk" style="left:1522px;top:505px;width:57px;letter-spacing:-0.665px">_Rand...</div>
<div class="tk" style="left:1579px;top:505px;width:57px;letter-spacing:-0.535px">_Resist...</div>
<div class="tk" style="left:1294px;top:537px;width:57px;letter-spacing:-0.535px">_Resist...</div>
<div class="tk" style="left:1351px;top:537px;width:57px;letter-spacing:-0.535px">_Resist...</div>
<div class="tk" style="left:1408px;top:537px;width:57px;letter-spacing:-0.535px">_Resist...</div>
<div class="tk" style="left:1465px;top:537px;width:57px;letter-spacing:-0.665px">_Rand...</div>
<div class="tk" style="left:1522px;top:537px;width:57px;letter-spacing:-0.535px">_Resist...</div>
<div class="tk" style="left:1579px;top:537px;width:57px;letter-spacing:-0.535px">_Resist...</div>
<div class="tk" style="left:1294px;top:569px;width:57px;letter-spacing:-0.535px">_Resist...</div>
<div class="tk" style="left:1408px;top:569px;width:57px;letter-spacing:-0.535px">_Resist...</div>
<div class="tk" style="left:1465px;top:569px;width:57px;letter-spacing:-0.665px">_Rand...</div>
<div class="tk" style="left:1522px;top:569px;width:57px;letter-spacing:-0.535px">_Resist...</div>
<div class="tk" style="left:1579px;top:569px;width:57px;letter-spacing:-0.535px">_Resist...</div>
<div class="tk" style="left:1294px;top:601px;width:57px;letter-spacing:-0.535px">_Resist...</div>
<div class="tk" style="left:1351px;top:601px;width:57px;letter-spacing:-0.535px">_Resist...</div>
<div class="tk" style="left:1408px;top:601px;width:57px;letter-spacing:-0.535px">_Resist...</div>
<div class="tk" style="left:1465px;top:601px;width:57px;letter-spacing:-0.665px">_Rand...</div>
<div class="tk" style="left:1522px;top:601px;width:57px;letter-spacing:-0.535px">_Resist...</div>
<div class="tk" style="left:1579px;top:601px;width:57px;letter-spacing:-0.535px">_Resist...</div>
<div class="tk" style="left:1294px;top:665px;width:57px;letter-spacing:-0.535px">_Resist...</div>
<div class="tk" style="left:1351px;top:665px;width:57px;letter-spacing:-0.535px">_Resist...</div>
<div class="tk" style="left:1408px;top:665px;width:57px;letter-spacing:-0.535px">_Resist...</div>
<div class="tk" style="left:1465px;top:665px;width:57px;letter-spacing:-0.535px">_Resist...</div>
<div class="tk" style="left:1522px;top:665px;width:57px;letter-spacing:-0.535px">_Resist...</div>
<div class="tk" style="left:1579px;top:665px;width:57px;letter-spacing:-0.535px">_Resist...</div>
<div class="tk" style="left:1294px;top:697px;width:57px;letter-spacing:-0.535px">_Resist...</div>
<div class="tk" style="left:1351px;top:697px;width:57px;letter-spacing:-0.535px">_Resist...</div>
<div class="tk" style="left:1408px;top:697px;width:57px;letter-spacing:-0.535px">_Resist...</div>
<div class="tk" style="left:1465px;top:697px;width:57px;letter-spacing:-0.535px">_Resist...</div>
<div class="tk" style="left:1522px;top:697px;width:57px;letter-spacing:-0.535px">_Resist...</div>
<div class="tk" style="left:1579px;top:697px;width:57px;letter-spacing:-0.535px">_Resist...</div>
<div class="tk" style="left:1294px;top:729px;width:57px;letter-spacing:-0.535px">_Resist...</div>
<div class="tk" style="left:1351px;top:729px;width:57px;letter-spacing:-0.535px">_Resist...</div>
<div class="tk" style="left:1408px;top:729px;width:57px;letter-spacing:-0.535px">_Resist...</div>
<div class="tk" style="left:1465px;top:729px;width:57px;letter-spacing:-0.535px">_Resist...</div>
<div class="tk" style="left:1522px;top:729px;width:57px;letter-spacing:-0.535px">_Resist...</div>
<div class="tk" style="left:1579px;top:729px;width:57px;letter-spacing:-0.535px">_Resist...</div>
<div class="tk" style="left:1294px;top:761px;width:57px;letter-spacing:-0.535px">_Resist...</div>
<div class="tk" style="left:1351px;top:761px;width:57px;letter-spacing:-0.535px">_Resist...</div>
<div class="tk" style="left:1408px;top:761px;width:57px;letter-spacing:-0.535px">_Resist...</div>
<div class="tk h" style="left:1465px;top:761px;width:57px;letter-spacing:-0.848px">_Resist...</div>
<div class="tk" style="left:1522px;top:761px;width:57px;letter-spacing:-0.535px">_Resist...</div>
<div class="tk" style="left:1579px;top:761px;width:57px;letter-spacing:-0.665px">_Rand...</div>
<div class="tk" style="left:1294px;top:793px;width:57px;letter-spacing:-0.535px">_Resist...</div>
<div class="tk" style="left:1351px;top:793px;width:57px;letter-spacing:-0.535px">_Resist...</div>
<div class="tk" style="left:1408px;top:793px;width:57px;letter-spacing:-0.535px">_Resist...</div>
<div class="tk" style="left:1465px;top:793px;width:57px;letter-spacing:-0.535px">_Resist...</div>
<div class="tk" style="left:1522px;top:793px;width:57px;letter-spacing:-0.535px">_Resist...</div>
<div class="tk" style="left:1579px;top:793px;width:57px;letter-spacing:-0.665px">_Rand...</div>
<div class="tk" style="left:1294px;top:825px;width:57px;letter-spacing:-0.535px">_Resist...</div>
<div class="tk" style="left:1351px;top:825px;width:57px;letter-spacing:-0.535px">_Resist...</div>
<div class="tk" style="left:1408px;top:825px;width:57px;letter-spacing:-0.535px">_Resist...</div>
<div class="tk" style="left:1465px;top:825px;width:57px;letter-spacing:-0.535px">_Resist...</div>
<div class="tk" style="left:1522px;top:825px;width:57px;letter-spacing:-0.535px">_Resist...</div>
<div class="tk" style="left:1579px;top:825px;width:57px;letter-spacing:-0.665px">_Rand...</div>
<div class="tk s" style="left:1351px;top:569px;width:57px;letter-spacing:-0.848px">_Resist...</div>
<svg style="left:0;top:0" width="1919" height="969" viewBox="0 0 1919 969"><g stroke="#555" stroke-width="1.900" fill="none"><path d="M872 391H887V583H1343"/><path d="M1408 583H1423M1423 551H1392M1392 519H1400"/><path d="M1465 519H1480M1449 775H1457"/></g><g stroke="#20151a" stroke-width="1" fill="none"><path d="M1422.500 583V551M1392.500 551V519"/><path d="M1479.500 519V647.500H1449.500V775"/></g><g fill="#0c0c0c"><path d="M1342 577.700L1351 582.800L1342 587.900z"/><path d="M1399 513.700L1408 518.800L1399 523.900z"/><path d="M1456 769.700L1465 774.800L1456 779.900z"/></g></svg>
<div class="a" style="left:706px;top:279px;width:2px;height:624px;background:#18a7fb"></div>
<div class="a" style="left:706px;top:279px;width:36px;height:26px;background:#18a7fb;border-radius:0 5px 5px 0;color:#fff;font-size:13px;font-weight:bold;line-height:26px;padding-left:4px;letter-spacing:-.3px">Now</div>
<div class="a" style="left:437px;top:913px;width:458px;height:52px;background:#fafafa"></div>
<svg style="left:0;top:0" width="1919" height="969" viewBox="0 0 1919 969"><path d="M265.5 953V965M284.5 953V965M303.5 953V965M322.5 953V965M341.5 953V965M360.5 953V965M379.5 953V965M398.5 953V965M417.5 953V965M436.5 953V965M455.5 953V965M474.5 953V965M494.5 953V965M513.5 953V965M532.5 953V965M551.5 953V965M570.5 953V965M589.5 953V965M608.5 953V965M627.5 953V965M646.5 953V965M665.5 953V965M684.5 953V965M703.5 953V965M722.5 913V965M741.5 953V965M760.5 953V965M779.5 953V965M798.5 953V965M817.5 953V965M836.5 953V965M855.5 953V965M874.5 953V965M893.5 953V965M912.5 953V965M931.5 953V965M950.5 953V965M970.5 953V965M989.5 953V965M1008.5 953V965M1027.5 953V965M1046.5 953V965M1065.5 953V965M1084.5 953V965M1103.5 953V965M1122.5 953V965M1141.5 953V965M1160.5 953V965M1179.5 913V965M1198.5 953V965M1217.5 953V965M1236.5 953V965M1255.5 953V965M1274.5 953V965M1293.5 953V965M1312.5 953V965M1331.5 953V965M1350.5 953V965M1369.5 953V965M1388.5 953V965M1408.5 953V965M1427.5 953V965M1446.5 953V965M1465.5 953V965M1484.5 953V965M1503.5 953V965M1522.5 953V965M1541.5 953V965M1560.5 953V965M1579.5 953V965M1598.5 953V965M1617.5 953V965" stroke="#c9c9c9" stroke-width="1" fill="none"/><path d="M479 939.500H512M583 939.500H658M780 939.500H1122M1236 939.500H1351" stroke="#777" stroke-width="2.500"/><path d="M584.500 913V965" stroke="#18a7fb" stroke-width="1.200"/><path d="M436 913V965M895 913V965" stroke="#1b6cb0" stroke-width="2"/><rect x="430.500" y="927" width="11" height="24" rx="4" fill="#1b6cb0"/><rect x="889.500" y="927" width="11" height="24" rx="4" fill="#1b6cb0"/><path d="M435 935h2M435 938.500h2M435 942h2M894 935h2M894 938.500h2M894 942h2" stroke="#9cc4e4" stroke-width="1.500"/></svg>
<div class="t" style="top:919.15px;font-size:14px;color:#555;left:272px;letter-spacing:0.233px;">28 Aug</div>
<div class="t" style="top:919.15px;font-size:14px;color:#555;left:729px;letter-spacing:0.233px;">29 Aug</div>
<div class="t" style="top:919.15px;font-size:14px;color:#555;left:1185px;letter-spacing:0.233px;">30 Aug</div>
<div class="a" style="left:16px;top:912px;width:1620px;height:1px;background:#cfcfcf"></div>
<div class="a" style="left:1661px;top:165px;width:2px;height:804px;background:#c6c6c6"></div>
<div class="a" style="left:1663px;top:166px;width:256px;height:803px;background:#fafafa"></div>
<div class="t" style="top:182.30px;font-size:15px;color:#222;left:1671px;letter-spacing:-0.626px;">_RESISTORS 1M - 04</div>
<svg style="left:1888px;top:181px" width="14" height="13" viewBox="0 0 14 13"><rect x=".5" y=".5" width="13" height="12" stroke="#9bb9d6" fill="#fff"/><rect x="11.500" y="0" width="2.500" height="13" fill="#1b6cb0"/><path d="M2.800 6.500h6.500M5.800 2.800L9.500 6.500 5.800 10.200" stroke="#1b6cb0" stroke-width=".9" fill="none"/></svg>
<div class="a" style="left:1663px;top:212px;width:256px;height:2px;background:#e2e2e2"></div>
<svg style="left:1681px;top:231px" width="17" height="16" viewBox="0 0 17 16"><path d="M16.500 8H2M8.500 1L1.500 8l7 7" stroke="#1b6cb0" stroke-width="1.800" fill="none"/></svg>
<svg style="left:1884px;top:231px" width="17" height="16" viewBox="0 0 17 16"><path d="M.5 8H15M8.500 1l7 7-7 7" stroke="#1b6cb0" stroke-width="1.800" fill="none"/></svg>
<div class="a" style="left:1718px;top:232px;width:14px;height:14px;background:#0a68a9"></div>
<div class="t" style="top:231.88px;font-size:15.5px;color:#1e6fae;left:1737px;letter-spacing:-0.171px;">_Resistors 1M - 04</div>
<div class="a" style="left:1663px;top:264px;width:256px;height:1px;background:#d6d6d6"></div>
<div class="a" style="left:1663px;top:265px;width:256px;height:44px;background:#f0f0f0"></div>
<svg style="left:1684px;top:279px" width="9" height="15" viewBox="0 0 9 15"><path d="M7.500 1L1.500 7.500l6 6.500" stroke="#1b6cb0" stroke-width="1.400" fill="none"/></svg>
<div class="t" style="top:280.50px;font-size:13px;color:#555;left:1707px;letter-spacing:-0.131px;">EMPLOYEES (1)</div>
<div class="a" style="left:1663px;top:309px;width:256px;height:1px;background:#dcdcdc"></div>
<svg style="left:1679px;top:320px" width="18" height="23" viewBox="0 0 18 23"><circle cx="9" cy="3" r="3" fill="#1b6cb0"/><path d="M0 20v-6.500C0 9 3.500 7.500 9 7.500s9 1.500 9 6V20h-2.800v-6h-1V23H3.800v-9h-1v6z" fill="#1b6cb0"/></svg>
<div class="t" style="top:318.30px;font-size:15px;color:#222;left:1709px;letter-spacing:-0.424px;">LP</div>
<div class="t" style="top:336.69px;font-size:11px;color:#666;left:1709px;letter-spacing:0.248px;">Able To Operate Metallizing</div>
<div class="a" style="left:1663px;top:354px;width:256px;height:1px;background:#e2e2e2"></div>

</div></body></html>
